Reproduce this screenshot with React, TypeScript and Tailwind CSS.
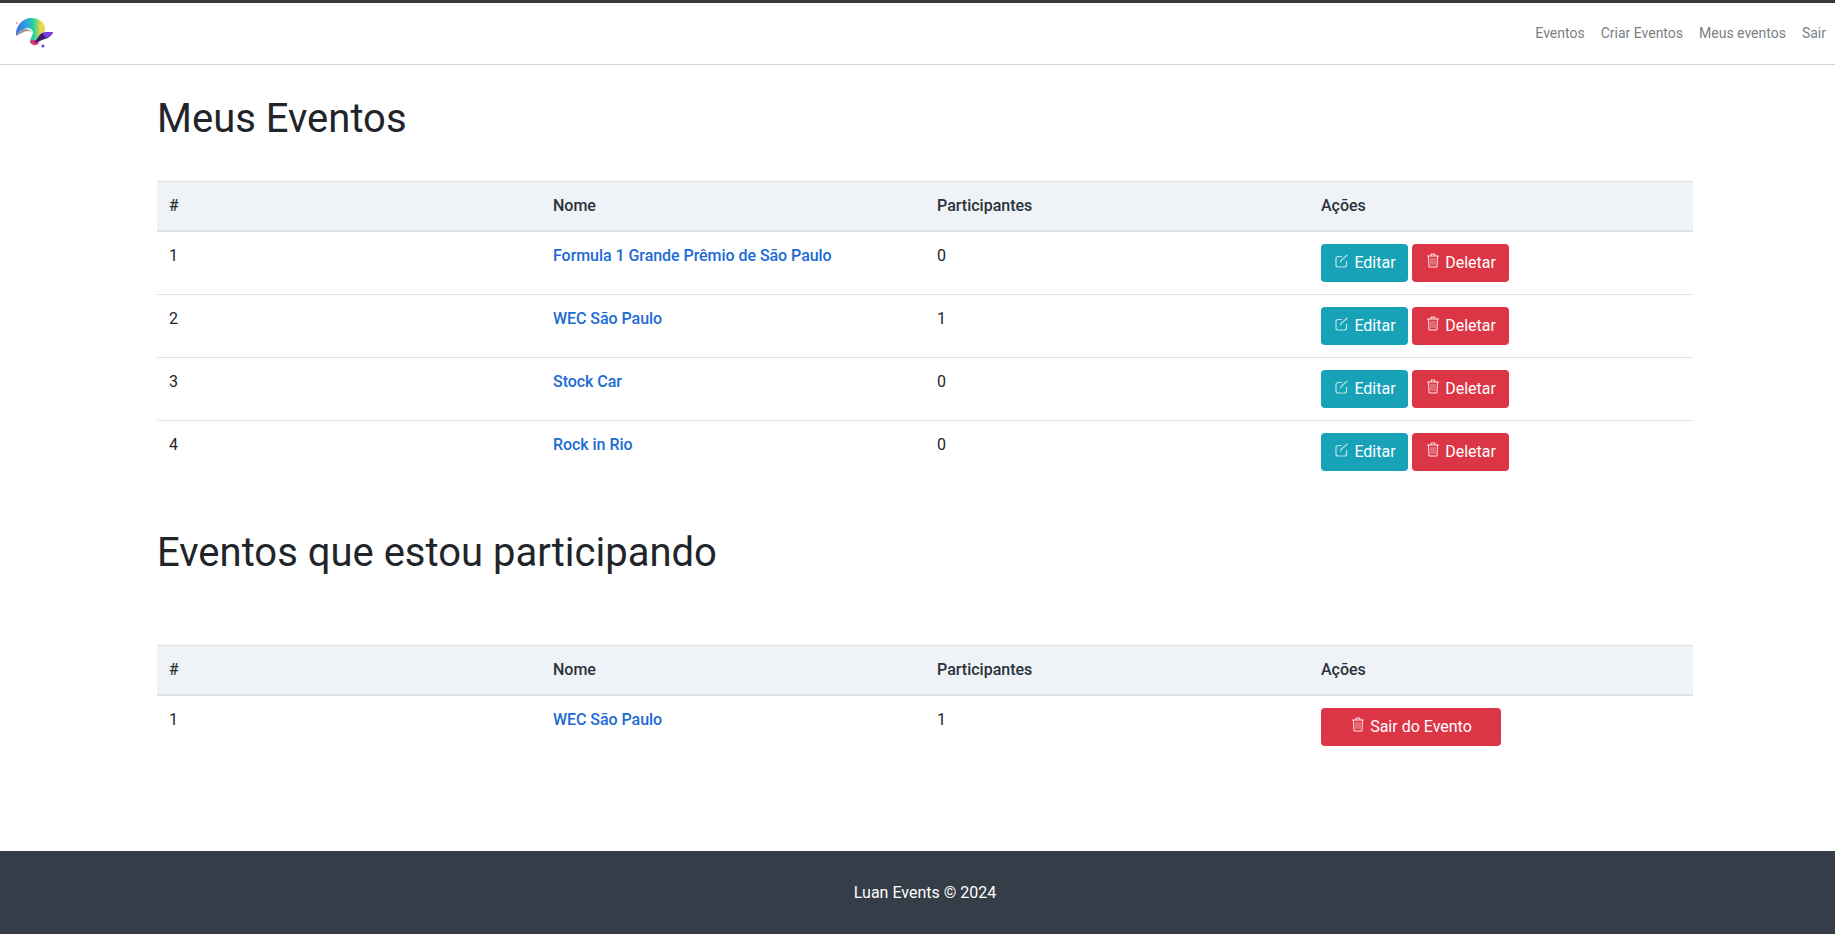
import React from 'react';

const font = { fontFamily: 'Roboto, sans-serif' };

function EditIcon() {
  return (
    <svg width="14" height="14" viewBox="0 0 14 14" fill="none" stroke="currentColor" strokeWidth="1.2" className="mb-[5px] opacity-70">
      <path d="M7 2.500H3a2 2 0 0 0-2 2v6.500a2 2 0 0 0 2 2h6.500a2 2 0 0 0 2-2V7" />
      <path d="M5.500 8.500l.5-2L12.500.8" />
    </svg>
  );
}

function TrashIcon() {
  return (
    <svg width="12" height="15" viewBox="0 0 12 15" fill="none" stroke="currentColor" strokeWidth="1" className="mb-[5px] opacity-90">
      <path d="M0 3h12M4 3V1h4v2" />
      <path d="M1.500 3l.5 11h8l.5-11" />
      <path d="M4 5v7M6 5v7M8 5v7" strokeOpacity="0.6" />
    </svg>
  );
}

const eventos = [
  { id: 1, nome: 'Formula 1 Grande Prêmio de São Paulo', participantes: 0 },
  { id: 2, nome: 'WEC São Paulo', participantes: 1 },
  { id: 3, nome: 'Stock Car', participantes: 0 },
  { id: 4, nome: 'Rock in Rio', participantes: 0 },
];

function Tabela({ rows, participando }: { rows: typeof eventos; participando?: boolean }) {
  return (
    <table className="w-full table-fixed border-collapse text-[16px] leading-[24px] text-[#212529]">
      <thead>
        <tr className="bg-[#eff2f7] text-left text-[#2b323a]">
          <th className="border-t border-b-2 border-[#dee2e6] p-3 font-medium">#</th>
          <th className="border-t border-b-2 border-[#dee2e6] p-3 font-medium">Nome</th>
          <th className="border-t border-b-2 border-[#dee2e6] p-3 font-medium">Participantes</th>
          <th className="border-t border-b-2 border-[#dee2e6] p-3 font-medium">Ações</th>
        </tr>
      </thead>
      <tbody>
        {rows.map((row, i) => (
          <tr key={row.id}>
            <td className={`p-3 align-top ${i > 0 ? 'border-t border-[#dee2e6]' : ''}`}>{i + 1}</td>
            <td className={`p-3 align-top ${i > 0 ? 'border-t border-[#dee2e6]' : ''}`}>
              <a href="#" className="font-medium tracking-[-0.05px] text-[#206bd4]">{row.nome}</a>
            </td>
            <td className={`p-3 align-top ${i > 0 ? 'border-t border-[#dee2e6]' : ''}`}>{row.participantes}</td>
            <td className={`p-3 align-top ${i > 0 ? 'border-t border-[#dee2e6]' : ''}`}>
              {participando ? (
                <button className="flex h-[38px] w-[180px] items-center justify-center gap-[6px] rounded bg-[#dc3545] pl-[2px] text-white">
                  <TrashIcon />
                  Sair do Evento
                </button>
              ) : (
                <div className="flex gap-1">
                  <button className="flex h-[38px] w-[87px] items-center justify-center gap-[5px] rounded bg-[#17a2b8] pl-[2px] text-white">
                    <EditIcon />
                    Editar
                  </button>
                  <button className="flex h-[38px] w-[97px] items-center justify-center gap-[6px] rounded bg-[#dc3545] pl-[2px] text-white">
                    <TrashIcon />
                    Deletar
                  </button>
                </div>
              )}
            </td>
          </tr>
        ))}
      </tbody>
    </table>
  );
}

export default function App() {
  return (
    <div className="flex min-h-[934px] flex-col bg-white" style={font}>
      <nav className="flex h-[65px] items-center justify-between border-t-[3px] border-b border-t-[#383838] border-b-[#cfd2d4] pl-[15px] pr-[9px]">
        <svg width="40" height="30" viewBox="0 0 40 30" className="mb-[2px]">
          <defs>
            <linearGradient id="logoA" x1="0" y1="0.5" x2="1" y2="0.5">
              <stop offset="0" stopColor="#3b6fe8" />
              <stop offset="0.35" stopColor="#2f9fe0" />
              <stop offset="0.6" stopColor="#22d3a0" />
              <stop offset="0.85" stopColor="#e8d84a" />
            </linearGradient>
          </defs>
          <circle cx="2" cy="5" r="1" fill="#f09a80" />
          <path d="M1 18C0 8 8 0 16 0c8 0 14 4 14 11 0 6-5 9-7 13-1 3-5 3-8 1 0-5 3-8 3-11-1-4-6-5-9-3-4 2-6 4-8 7z" fill="url(#logoA)" />
          <path d="M1 18c2-4 6-8 10-7 3 0 5 2 6 3-4-2-7-1-10 1-2 1-4 2-6 3z" fill="#9a9a9a" />
          <path d="M15 24c2 4 7 4 9 1l-2-3-6 0z" fill="#e0357a" />
          <path d="M19 25c3-4 5-8 8-10 3-1 8-1 11-1-1 3-4 6-8 7-4 1-8 4-11 4z" fill="#3a1f70" />
          <path d="M27 15c3-1 8-1 11-1-1 3-3 4-7 6z" fill="#7a3de8" />
          <circle cx="28" cy="28" r="1.500" fill="#5a3de8" />
        </svg>
        <div className="flex gap-4 text-[14px] text-[#7a7f84]">
          <a href="#">Eventos</a>
          <a href="#">Criar Eventos</a>
          <a href="#">Meus eventos</a>
          <a href="#">Sair</a>
        </div>
      </nav>
      <div className="flex flex-1 flex-col pl-[15px]">
        <main className="mx-auto w-[1536px] flex-1">
          <h1 className="mt-[30px] mb-[38px] text-[40px] leading-[48px] text-[#212529]">Meus Eventos</h1>
          <Tabela rows={eventos} />
          <h1 className="mt-[46px] mb-[68px] text-[40px] leading-[48px] text-[#212529]">Eventos que estou participando</h1>
          <Tabela rows={[eventos[1]]} participando />
        </main>
      </div>
      <footer className="flex h-[83px] items-center justify-center bg-[#353d48] pl-[15px] text-[16px] text-white">
        Luan Events © 2024
      </footer>
    </div>
  );
}
